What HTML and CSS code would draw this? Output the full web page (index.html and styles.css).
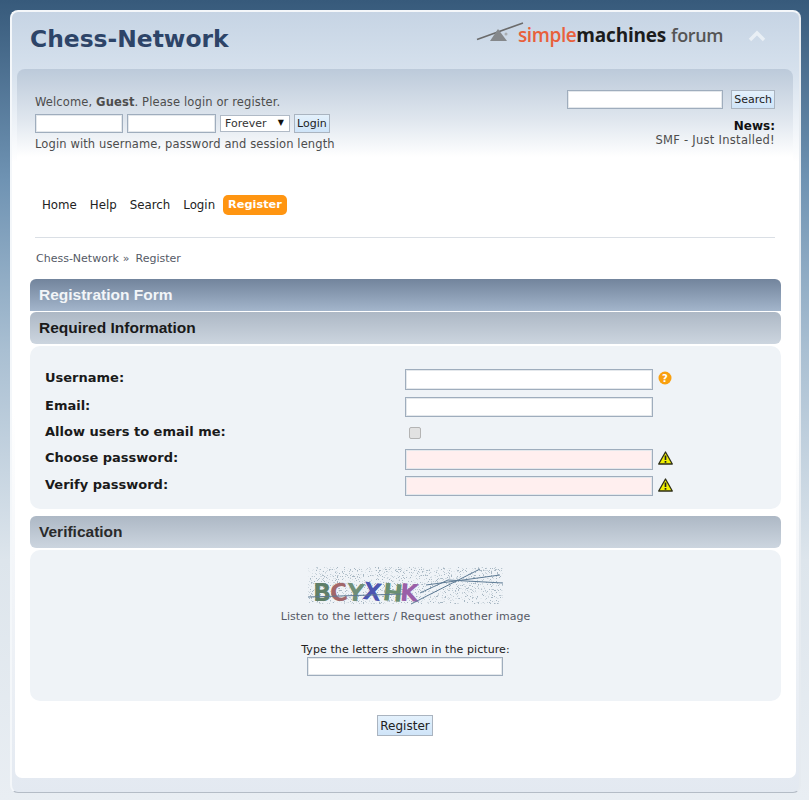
FILE: index.html
```html
<!DOCTYPE html>
<html lang="en">
<head>
    <meta charset="UTF-8">
    <meta name="viewport" content="width=device-width, initial-scale=1.0">
    <title>Chess-Network - Register</title>
    <link rel="stylesheet" href="styles.css">
</head>
<body>
    <div class="wrapper">
        <div class="header">
            <h1 class="forum-title">Chess-Network</h1>
            <div class="smf-logo">
                <svg class="smf-mark" width="48" height="20" viewBox="0 0 48 20">
                    <path d="M1 17.5 L47 1" stroke="#6b6b6b" stroke-width="1.6" fill="none"/>
                    <path d="M22 7 L31 19 L14 19 Z" fill="#85888b"/>
                    <circle cx="30" cy="12" r="1.5" fill="#a9adb1"/>
                </svg>
                <span class="logo-simple">simple</span><span class="logo-machines">machines</span><span class="logo-forum">forum</span>
            </div>
            <svg class="collapse-icon" width="18" height="12" viewBox="0 0 18 12">
                <path d="M2 10 L9 3 L16 10" stroke="#e9eff5" stroke-width="3.4" fill="none"/>
            </svg>
        </div>

        <div class="upper-section">
            <div class="user-info">
                <p class="welcome">Welcome, <strong>Guest</strong>. Please <a href="#">login</a> or <a href="#">register</a>.</p>
                <form class="login-form">
                    <input type="text" class="input-text input-user">
                    <input type="password" class="input-text input-pass">
                    <span class="select-wrap">
                        <select class="session-select"><option>Forever</option></select>
                        <span class="select-arrow">▼</span>
                    </span>
                    <button type="button" class="button-submit">Login</button>
                </form>
                <p class="login-hint">Login with username, password and session length</p>
            </div>
            <div class="news-info">
                <form class="search-form">
                    <input type="text" class="input-text input-search">
                    <button type="button" class="button-submit">Search</button>
                </form>
                <h2 class="news-title">News:</h2>
                <p class="news-text">SMF - Just Installed!</p>
            </div>
        </div>

        <div class="content-section">
            <ul class="main-menu">
                <li><a href="#">Home</a></li>
                <li><a href="#">Help</a></li>
                <li><a href="#">Search</a></li>
                <li><a href="#">Login</a></li>
                <li><a href="#" class="active">Register</a></li>
            </ul>

            <div class="linktree"><a href="#">Chess-Network</a><span class="sep">»</span><a href="#">Register</a></div>

            <h3 class="cat-bar">Registration Form</h3>
            <h4 class="title-bar">Required Information</h4>
            <div class="window-box form-box">
                <label class="form-label">Username:</label>
                <div class="form-field">
                    <input type="text" class="input-text input-wide input-tall">
                    <svg class="field-icon" width="14" height="14" viewBox="0 0 14 14">
                        <circle cx="7" cy="7" r="6.5" fill="#f9a00f"/>
                        <text x="7" y="11" class="help-mark" text-anchor="middle">?</text>
                    </svg>
                </div>
                <label class="form-label">Email:</label>
                <div class="form-field">
                    <input type="text" class="input-text input-wide">
                </div>
                <label class="form-label">Allow users to email me:</label>
                <div class="form-field">
                    <input type="checkbox" class="check">
                </div>
                <label class="form-label">Choose password:</label>
                <div class="form-field">
                    <input type="password" class="input-text input-wide input-tall input-invalid">
                    <svg class="field-icon" width="15" height="14" viewBox="0 0 15 14">
                        <path d="M7.5 1 L14.3 13 L0.7 13 Z" fill="#f0f000" stroke="#2e2e18" stroke-width="1.3" stroke-linejoin="round"/>
                        <path d="M7.5 4.5 V9 M7.5 10 V11.8" stroke="#222" stroke-width="1.7"/>
                    </svg>
                </div>
                <label class="form-label">Verify password:</label>
                <div class="form-field">
                    <input type="password" class="input-text input-wide input-invalid">
                    <svg class="field-icon" width="15" height="14" viewBox="0 0 15 14">
                        <path d="M7.5 1 L14.3 13 L0.7 13 Z" fill="#f0f000" stroke="#2e2e18" stroke-width="1.3" stroke-linejoin="round"/>
                        <path d="M7.5 4.5 V9 M7.5 10 V11.8" stroke="#222" stroke-width="1.7"/>
                    </svg>
                </div>
            </div>

            <h4 class="title-bar title-bar-verify">Verification</h4>
            <div class="window-box verify-box">
                <svg class="captcha" width="195" height="41" viewBox="0 0 195 41">
                    <defs>
                        <!-- random speckle behind the captcha letters -->
                        <filter id="speckle" x="0" y="0" width="100%" height="100%">
                            <feTurbulence type="fractalNoise" baseFrequency="0.85" numOctaves="2" seed="7"/>
                            <feColorMatrix type="matrix" values="0 0 0 0 0.38  0 0 0 0 0.47  0 0 0 0 0.54  9 0 0 0 -5.3"/>
                        </filter>
                    </defs>
                    <rect width="195" height="37" filter="url(#speckle)"/>
                    <text x="5" y="34" class="cap-letter" fill="#5f7f68">B</text>
                    <text x="22" y="34" class="cap-letter" fill="#a2676a" transform="rotate(-6 30 25)">C</text>
                    <text x="39" y="34" class="cap-letter" fill="#6f8f78" transform="rotate(5 47 25)">Y</text>
                    <text x="55" y="33" class="cap-letter" fill="#4d55b0" transform="rotate(8 63 25)">X</text>
                    <text x="75" y="34" class="cap-letter" fill="#6a8f70" transform="rotate(6 83 25)">H</text>
                    <text x="92" y="34" class="cap-letter" fill="#9a5fa8" transform="rotate(4 100 25)">K</text>
                    <path d="M0 30 L95 27 M103 37 L172 2 M118 18 L192 8 M112 26 L140 13 L195 16" stroke="#5d7a94" stroke-width="1" fill="none"/>
                </svg>
                <p class="captcha-links"><a href="#">Listen to the letters</a> / <a href="#">Request another image</a></p>
                <p class="captcha-prompt">Type the letters shown in the picture:</p>
                <input type="text" class="input-text input-captcha">
            </div>

            <div class="submit-row">
                <button type="button" class="button-submit button-register">Register</button>
            </div>
        </div>
        <div class="footer-band"></div>
    </div>
</body>
</html>
```

FILE: styles.css
```css
html, body {
    margin: 0;
    padding: 0;
}

body {
    height: 800px;
    box-sizing: border-box;
    padding: 10px 8px 7px 10px;
    overflow: hidden;
    background: linear-gradient(to bottom, #375a7b 0, #6f93b3 180px, #a9bfd2 350px, #dde5ec 560px, #e9eef3 100%);
    font-family: "DejaVu Sans", Verdana, sans-serif;
    font-size: 11.5px;
    color: #4d4d4d;
}

a {
    color: inherit;
    text-decoration: none;
}

p, h1, h2, h3, h4, ul {
    margin: 0;
    padding: 0;
}

.wrapper {
    height: 783px;
    box-sizing: border-box;
    display: flex;
    flex-direction: column;
    padding: 0 3px;
    border: 1px solid #b4bcc6;
    border-top-color: #f4f7fa;
    border-right-color: #e6ebf0;
    border-left-color: #f4f7fa;
    border-width: 2px 2px 1px;
    border-radius: 8px;
    background: linear-gradient(to bottom, #c6d4e4 0, #d6e1ed 60px, #ffffff 150px, #ffffff 400px, #e3e9f1 100%);
}

/* header */
.header {
    height: 57px;
    flex: none;
    display: flex;
    align-items: flex-start;
    position: relative;
}

.forum-title {
    margin: 11px 0 0 15px;
    font-size: 23.4px;
    line-height: 32px;
    font-weight: bold;
    color: #2d4468;
}

.smf-logo {
    margin: 10px 73px 0 auto;
    display: flex;
    align-items: baseline;
    font-family: "Open Sans", sans-serif;
    font-size: 19px;
    line-height: 26px;
    font-weight: 600;
    letter-spacing: -0.4px;
}

.smf-mark {
    align-self: flex-start;
    margin-right: -6px;
}

.logo-simple {
    color: #e8603c;
}

.logo-machines {
    color: #1c1c1c;
    font-weight: 700;
    letter-spacing: -0.2px;
}

.logo-forum {
    margin-left: 5px;
    color: #555;
    font-size: 18px;
}

.collapse-icon {
    position: absolute;
    right: 30px;
    top: 18px;
}

/* login and search */
.upper-section {
    flex: none;
    height: 92px;
    margin: 0 3px 0 2px;
    box-sizing: border-box;
    padding: 21px 18px 0;
    display: flex;
    justify-content: space-between;
    border-radius: 8px 8px 0 0;
    background: linear-gradient(to bottom, #bccada 0, #dfe6ee 50px, #ffffff 88px);
}

.welcome {
    margin-top: 4px;
    line-height: 16px;
    letter-spacing: 0.13px;
}

.login-form {
    display: flex;
    align-items: center;
    gap: 4px;
    margin-top: 4px;
}

.input-text {
    box-sizing: border-box;
    height: 19px;
    margin: 0;
    padding: 0;
    border: 1px solid #9fadbd;
    background: #fff;
    box-shadow: inset 0 0 0 1px #e4e8ec;
}

.input-user {
    width: 88px;
}

.input-pass {
    width: 89px;
}

.select-wrap {
    position: relative;
    display: block;
    height: 17px;
}

.session-select {
    display: block;
    appearance: none;
    box-sizing: border-box;
    width: 70px;
    height: 17px;
    padding: 0 0 0 4px;
    border: 1px solid #b0bac6;
    border-radius: 0;
    background: #fff;
    font-family: inherit;
    font-size: 11px;
    color: #333;
}

.select-arrow {
    position: absolute;
    right: 6px;
    top: 3px;
    font-size: 8px;
    line-height: 10px;
    color: #111;
}

.button-submit {
    height: 19px;
    padding: 0 2px;
    border: 1px solid #aab4c0;
    background: linear-gradient(to bottom, #e4f1fc, #cfe4f8);
    font-family: inherit;
    font-size: 11px;
    color: #222;
}

.login-hint {
    margin-top: 3px;
    line-height: 16px;
    letter-spacing: 0.12px;
}

.news-info {
    text-align: right;
}

.search-form {
    display: flex;
    align-items: center;
    gap: 8px;
}

.input-search {
    width: 156px;
}

.news-title {
    margin-top: 10px;
    font-size: 12px;
    line-height: 14px;
    color: #111;
}

.news-text {
    line-height: 14px;
    letter-spacing: 0.28px;
}

/* main area */
.content-section {
    flex: 1;
    padding: 0 21px 0 20px;
    background: #fff;
    border-radius: 0 0 7px 7px;
}

.main-menu {
    list-style: none;
    margin: 34px 0 0;
    display: flex;
    align-items: center;
    gap: 3px;
    height: 20px;
    padding: 0 0 22px 2px;
    border-bottom: 1px solid #dadfe5;
    font-size: 11.8px;
    color: #222;
}

.main-menu a {
    display: block;
    padding: 0 5px;
    line-height: 20px;
}

.main-menu a.active {
    background: #ff9511;
    border-radius: 5px;
    color: #fff;
    font-weight: bold;
    font-size: 11.3px;
}

.linktree {
    margin: 13px 0 0 1px;
    line-height: 16px;
    font-size: 11px;
    color: #555a66;
}

.linktree .sep {
    margin: 0 6px 0 4px;
}

.cat-bar, .title-bar {
    margin-left: -5px;
    margin-right: -6px;
    height: 32px;
    box-sizing: border-box;
    padding-left: 9px;
    font-family: "Liberation Sans", Arial, sans-serif;
    font-size: 15.5px;
    line-height: 31px;
    font-weight: bold;
}

.cat-bar {
    margin-top: 12px;
    border-radius: 6px 6px 0 0;
    color: #f2f5f8;
    background: linear-gradient(to bottom, #72849c, #a3b5cb);
}

.title-bar {
    margin-top: 1px;
    border-radius: 6px;
    color: #191919;
    background: linear-gradient(to bottom, #adb8c5, #ccd5df);
}

.title-bar-verify {
    margin-top: 7px;
    color: #2a2a2a;
}

.window-box {
    margin: 2px -6px 0 -5px;
    border-radius: 10px;
    background: #eff3f7;
}

/* registration fields */
.form-box {
    height: 163px;
    box-sizing: border-box;
    padding: 23px 15px 0;
    display: grid;
    grid-template-columns: 360px 1fr;
    grid-template-rows: 28px 26px 26px 27px 20px;
    align-items: start;
}

.form-label {
    font-size: 13px;
    font-weight: bold;
    color: #1a1a1a;
    line-height: 16px;
    margin-top: 1px;
}

.form-field {
    display: flex;
    align-items: flex-start;
    gap: 5px;
}

.input-wide {
    width: 248px;
    height: 20px;
}

.input-tall {
    height: 21px;
}

.input-invalid {
    background: #ffefef;
}

.field-icon {
    margin-top: 2px;
}

.help-mark {
    font-size: 10px;
    font-weight: bold;
    fill: #fff;
}

.check {
    appearance: none;
    box-sizing: border-box;
    width: 12px;
    height: 12px;
    margin: 4px 0 0 4px;
    border: 1px solid #b4b4b4;
    border-radius: 2px;
    background: #e2e2e2;
}

/* captcha */
.verify-box {
    height: 151px;
    box-sizing: border-box;
    padding-top: 17px;
    text-align: center;
}

.captcha {
    display: block;
    margin: 0 auto -4px;
}

.cap-letter {
    font-family: "DejaVu Sans", sans-serif;
    font-size: 24px;
    font-weight: bold;
}

.captcha-links {
    margin-top: 5px;
    font-size: 11px;
    line-height: 16px;
    letter-spacing: 0.04px;
    color: #555a66;
}

.captcha-prompt {
    margin-top: 17px;
    font-size: 11px;
    line-height: 16px;
    letter-spacing: 0.08px;
    color: #222;
}

.input-captcha {
    display: block;
    width: 196px;
    margin: -1px auto 0 277px;
}

.submit-row {
    margin-top: 14px;
    text-align: center;
}

.button-register {
    height: 21px;
    font-size: 12px;
}

.footer-band {
    height: 14px;
    flex: none;
}
```
